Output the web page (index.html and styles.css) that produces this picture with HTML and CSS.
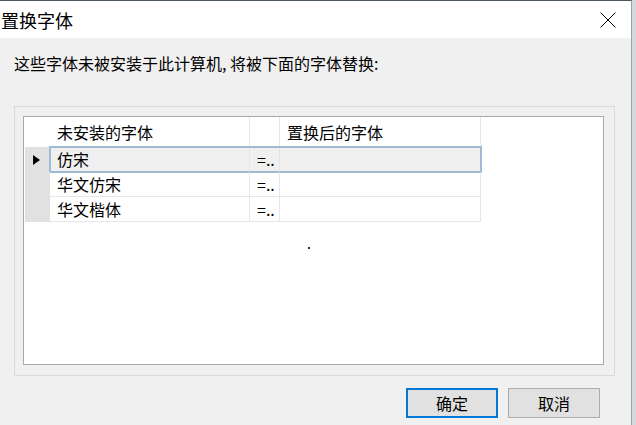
FILE: index.html
```html
<!DOCTYPE html>
<html lang="zh-CN">

	<head>
		<meta charset="UTF-8">
		<title>置换字体</title>
		<link rel="stylesheet" href="styles.css">
	</head>

	<body>
		<div class="window">
			<!-- 标题栏 -->
			<div class="titlebar">
				<span class="title">置换字体</span>
				<svg class="close" width="16" height="16" viewBox="0 0 16 16">
					<path d="M0.5 0.5 L15.5 15.5 M15.5 0.5 L0.5 15.5" stroke="#000" stroke-width="1" fill="none"/>
				</svg>
			</div>

			<div class="dialog">
				<div class="label">这些字体未被安装于此计算机, 将被下面的字体替换:</div>

				<div class="group">
					<div class="grid">
						<div class="row head">
							<div class="rh"></div>
							<div class="cells">
								<div class="c1">未安装的字体</div>
								<div class="c2"></div>
								<div class="c3">置换后的字体</div>
							</div>
						</div>
						<div class="row">
							<div class="rh"><span class="arrow"></span></div>
							<div class="cells current">
								<div class="c1">仿宋</div>
								<div class="c2">=..</div>
								<div class="c3"></div>
							</div>
						</div>
						<div class="row">
							<div class="rh"></div>
							<div class="cells">
								<div class="c1">华文仿宋</div>
								<div class="c2">=..</div>
								<div class="c3"></div>
							</div>
						</div>
						<div class="row">
							<div class="rh"></div>
							<div class="cells">
								<div class="c1">华文楷体</div>
								<div class="c2">=..</div>
								<div class="c3"></div>
							</div>
						</div>
						<span class="speck"></span>
					</div>
				</div>

				<div class="buttons">
					<button class="btn default">确定</button>
					<button class="btn">取消</button>
				</div>
			</div>
		</div>
	</body>

</html>
```

FILE: styles.css
```css
html,
body {
	margin: 0;
	padding: 0;
	height: 100%;
}

body {
	background-color: #d4d8dc;
	font-family: "Noto Sans CJK SC", "Noto Sans", sans-serif;
	color: #000;
	overflow: hidden;
}

.window {
	width: 632px;
	height: 425px;
	box-sizing: border-box;
	border-top: 1px solid #4a5560;
	border-right: 1px solid #a0a0a0;
	background-color: #f0f0f0;
}

.titlebar {
	height: 37px;
	background-color: #fff;
	display: flex;
	align-items: center;
	justify-content: space-between;
	padding: 0 15px 0 1px;
}

.title {
	font-size: 18px;
	line-height: 22px;
}

.close {
	display: block;
	margin-top: 1px;
}

.dialog {
	padding: 15px 0 0 14px;
}

.label {
	font-size: 16px;
	line-height: 20px;
}

.group {
	width: 601px;
	height: 270px;
	box-sizing: border-box;
	margin-top: 33px;
	border: 1px solid #dadada;
	padding: 9px 10px 10px 8px;
}

.grid {
	position: relative;
	height: 249px;
	box-sizing: border-box;
	border: 1px solid #a9a9a9;
	background-color: #fff;
	padding: 0 0 0 1px;
}

.row {
	display: flex;
	height: 25px;
	font-size: 16px;
}

.row.head {
	height: 30px;
}

.rh {
	width: 25px;
	background-color: #e1e1e1;
	display: flex;
	align-items: center;
	padding-left: 8px;
	box-sizing: border-box;
}

.head .rh {
	background-color: #fff;
}

.arrow {
	width: 0;
	height: 0;
	border-top: 5.5px solid transparent;
	border-bottom: 5.5px solid transparent;
	border-left: 7px solid #000;
}

.cells {
	display: flex;
}

.cells > div {
	box-sizing: border-box;
	border-right: 1px solid #e6e6e6;
	border-bottom: 1px solid #e6e6e6;
	padding-left: 7px;
	display: flex;
	align-items: center;
	white-space: nowrap;
	overflow: hidden;
}

.head .cells > div {
	border-bottom: none;
}

.c1 {
	width: 200px;
}

.c2 {
	width: 30px;
}

.c3 {
	width: 201px;
}

.cells.current {
	background-color: #f0f0f0;
	outline: 2px solid #9fbad3;
	outline-offset: -1px;
}

.speck {
	position: absolute;
	left: 284px;
	top: 130px;
	width: 2px;
	height: 2px;
	background-color: #333;
}

.buttons {
	display: flex;
	justify-content: flex-end;
	gap: 10px;
	margin-top: 12px;
	padding-right: 31px;
}

.btn {
	width: 92px;
	height: 30px;
	box-sizing: border-box;
	background-color: #e1e1e1;
	border: 1px solid #adadad;
	font-family: "Noto Sans CJK SC", "Noto Sans", sans-serif;
	font-size: 16px;
	line-height: 20px;
	color: #000;
	padding: 0;
}

.btn.default {
	border: 2px solid #0078d7;
}
```
